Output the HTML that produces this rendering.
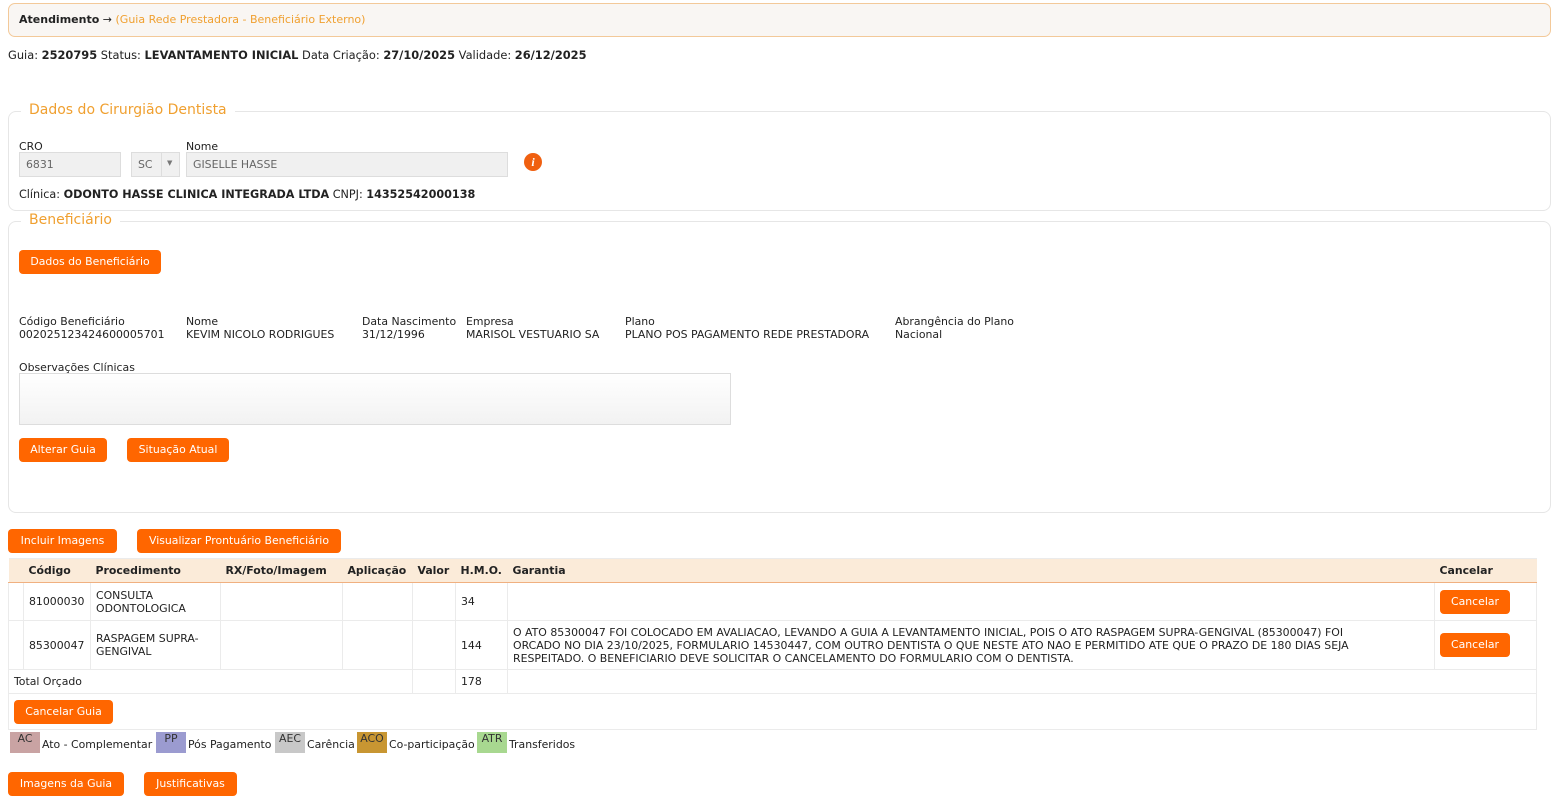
<!DOCTYPE html>
<html><head><meta charset="utf-8"><style>
*{box-sizing:border-box;margin:0;padding:0}
body{width:1552px;height:808px;background:#fff;font-family:"DejaVu Sans","Liberation Sans",sans-serif;font-size:10.9px;color:#222;position:relative;overflow:hidden}
.a{position:absolute;white-space:nowrap}
.btn{position:absolute;background:#ff6600;color:#fff;border-radius:4px;height:24px;line-height:24px;text-align:center;font-size:10.9px}
.fs{position:absolute;border:1px solid #e6e6e6;border-radius:8px}
.inp{position:absolute;background:#f0f0f0;border:1px solid #ddd;height:25px;line-height:23px;padding-left:6px;color:#666}
table{position:absolute;left:8px;top:558px;border-collapse:collapse;table-layout:fixed;width:1528px}
td,th{border:1px solid #ebebeb;padding:0 5px;text-align:left;vertical-align:middle;font-weight:normal;line-height:13px}
th{background:#fbebd9;font-weight:bold;height:24px;border-bottom:1px solid #f0b080;border-left:none;border-right:none}
b{font-weight:bold}
</style></head><body>
<div class="a" style="left:8px;top:3px;width:1543px;height:34px;border:1px solid #f3c999;border-radius:7px;background:#f9f6f3"></div>
<div class="a" style="left:19px;top:13px;font-size:11px"><b>Atendimento</b> → <span style="color:#f0a030">(Guia Rede Prestadora - Beneficiário Externo)</span></div>
<div class="a" style="left:8px;top:48px;font-size:11.4px">Guia: <b>2520795</b> Status: <b>LEVANTAMENTO INICIAL</b> Data Criação: <b>27/10/2025</b> Validade: <b>26/12/2025</b></div>

<div class="fs" style="left:8px;top:111px;width:1543px;height:100px"></div>
<div class="a" style="left:21px;top:102px;background:#fff;padding:0 8px;color:#f0a030;font-size:14px">Dados do Cirurgião Dentista</div>
<div class="a" style="left:19px;top:140px">CRO</div>
<div class="a" style="left:186px;top:140px">Nome</div>
<div class="inp" style="left:19px;top:152px;width:102px">6831</div>
<div class="inp" style="left:131px;top:152px;width:49px">SC</div>
<div class="a" style="left:161px;top:153px;width:1px;height:23px;background:#ddd"></div>
<div class="a" style="left:167px;top:159px;font-size:7px;color:#777">▼</div>
<div class="inp" style="left:186px;top:152px;width:322px">GISELLE HASSE</div>
<div class="a" style="left:524px;top:153px;width:18px;height:18px;border-radius:50%;background:#f06010;color:#fff;font:italic bold 12px 'Liberation Serif',serif;text-align:center;line-height:18px">i</div>
<div class="a" style="left:19px;top:188px;font-size:11.2px">Clínica: <b>ODONTO HASSE CLINICA INTEGRADA LTDA</b> CNPJ: <b>14352542000138</b></div>

<div class="fs" style="left:8px;top:221px;width:1543px;height:292px"></div>
<div class="a" style="left:21px;top:212px;background:#fff;padding:0 8px;color:#f0a030;font-size:14px">Beneficiário</div>
<div class="btn" style="left:19px;top:250px;width:142px">Dados do Beneficiário</div>
<div class="a" style="left:19px;top:315px;line-height:13px">Código Beneficiário<br>002025123424600005701</div>
<div class="a" style="left:186px;top:315px;line-height:13px">Nome<br>KEVIM NICOLO RODRIGUES</div>
<div class="a" style="left:362px;top:315px;line-height:13px">Data Nascimento<br>31/12/1996</div>
<div class="a" style="left:466px;top:315px;line-height:13px">Empresa<br>MARISOL VESTUARIO SA</div>
<div class="a" style="left:625px;top:315px;line-height:13px">Plano<br>PLANO POS PAGAMENTO REDE PRESTADORA</div>
<div class="a" style="left:895px;top:315px;line-height:13px">Abrangência do Plano<br>Nacional</div>
<div class="a" style="left:19px;top:361px">Observações Clínicas</div>
<div class="a" style="left:19px;top:373px;width:712px;height:52px;border:1px solid #ddd;background:linear-gradient(#fff,#f2f2f2)"></div>
<div class="btn" style="left:19px;top:438px;width:88px">Alterar Guia</div>
<div class="btn" style="left:127px;top:438px;width:102px">Situação Atual</div>

<div class="btn" style="left:8px;top:529px;width:109px">Incluir Imagens</div>
<div class="btn" style="left:137px;top:529px;width:204px">Visualizar Prontuário Beneficiário</div>

<table>
<colgroup><col style="width:15px"><col style="width:67px"><col style="width:130px"><col style="width:122px"><col style="width:70px"><col style="width:43px"><col style="width:52px"><col style="width:927px"><col style="width:102px"></colgroup>
<tr><th></th><th>Código</th><th>Procedimento</th><th>RX/Foto/Imagem</th><th>Aplicação</th><th>Valor</th><th>H.M.O.</th><th>Garantia</th><th>Cancelar</th></tr>
<tr style="height:38px"><td></td><td>81000030</td><td>CONSULTA ODONTOLOGICA</td><td></td><td></td><td></td><td>34</td><td></td><td><span class="btn" style="position:relative;display:inline-block;width:70px">Cancelar</span></td></tr>
<tr style="height:49px"><td></td><td>85300047</td><td>RASPAGEM SUPRA-GENGIVAL</td><td></td><td></td><td></td><td>144</td><td style="white-space:nowrap;overflow:hidden">O ATO 85300047 FOI COLOCADO EM AVALIACAO, LEVANDO A GUIA A LEVANTAMENTO INICIAL, POIS O ATO RASPAGEM SUPRA-GENGIVAL (85300047) FOI<br>ORCADO NO DIA 23/10/2025, FORMULARIO 14530447, COM OUTRO DENTISTA O QUE NESTE ATO NAO E PERMITIDO ATE QUE O PRAZO DE 180 DIAS SEJA<br>RESPEITADO. O BENEFICIARIO DEVE SOLICITAR O CANCELAMENTO DO FORMULARIO COM O DENTISTA.</td><td><span class="btn" style="position:relative;display:inline-block;width:70px">Cancelar</span></td></tr>
<tr style="height:24px"><td colspan="5" style="border-right:none">Total Orçado</td><td></td><td>178</td><td colspan="2"></td></tr>
<tr style="height:36px"><td colspan="9"><span class="btn" style="position:relative;display:inline-block;width:99px">Cancelar Guia</span></td></tr>
</table>

<div class="a" style="left:10px;top:732px;width:30px;height:21px;background:#c9a3a3;text-align:center;color:#333">AC</div>
<div class="a" style="left:42px;top:738px">Ato - Complementar</div>
<div class="a" style="left:156px;top:732px;width:30px;height:21px;background:#9b9bd0;text-align:center;color:#333">PP</div>
<div class="a" style="left:188px;top:738px">Pós Pagamento</div>
<div class="a" style="left:275px;top:732px;width:30px;height:21px;background:#c8c8c8;text-align:center;color:#333">AEC</div>
<div class="a" style="left:307px;top:738px">Carência</div>
<div class="a" style="left:357px;top:732px;width:30px;height:21px;background:#c89632;text-align:center;color:#333">ACO</div>
<div class="a" style="left:389px;top:738px">Co-participação</div>
<div class="a" style="left:477px;top:732px;width:30px;height:21px;background:#a8d890;text-align:center;color:#333">ATR</div>
<div class="a" style="left:509px;top:738px">Transferidos</div>

<div class="btn" style="left:8px;top:772px;width:116px">Imagens da Guia</div>
<div class="btn" style="left:144px;top:772px;width:93px">Justificativas</div>
</body></html>
